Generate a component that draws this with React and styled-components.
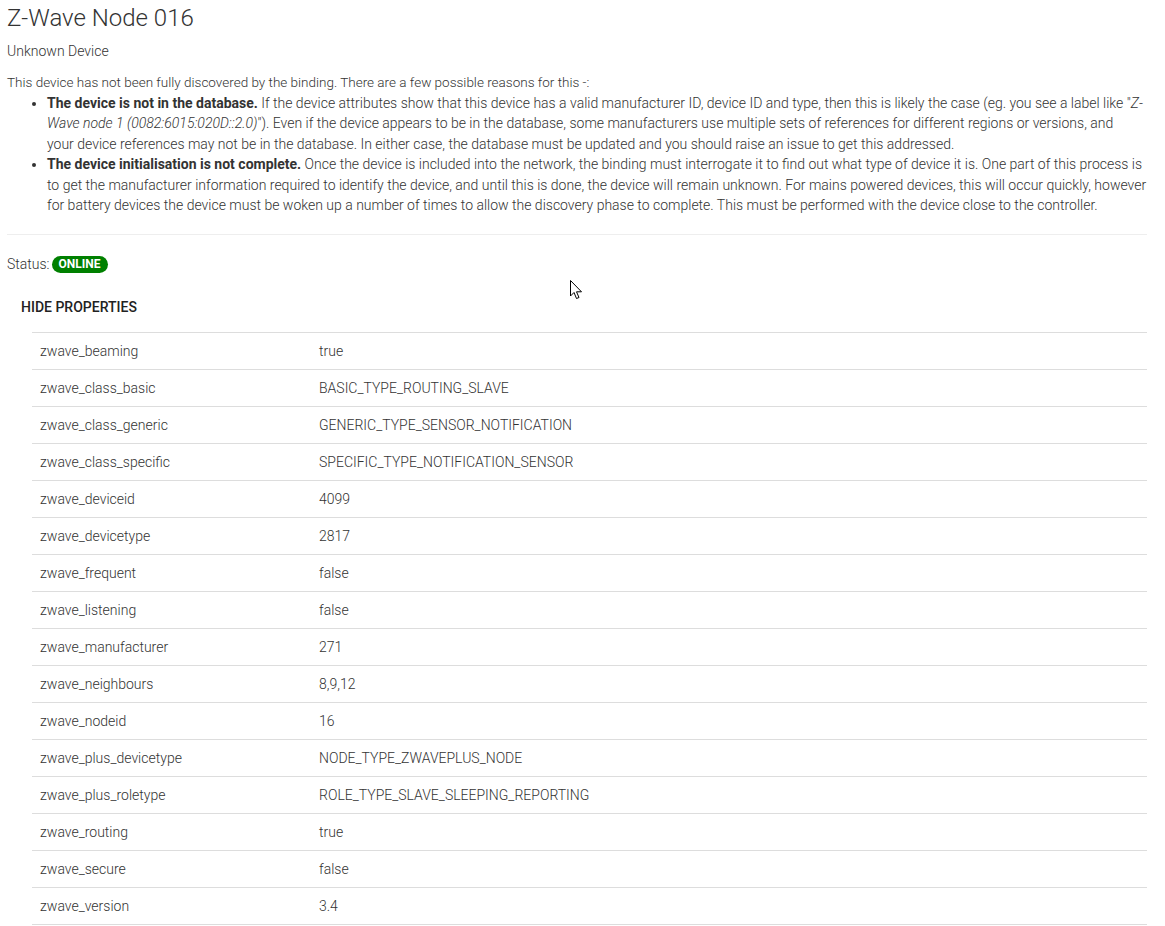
import React from "react";
import styled, { createGlobalStyle } from "styled-components";

const GlobalStyle = createGlobalStyle`
  body {
    margin: 0;
    background: #fff;
    font-family: Roboto, "Noto Sans", sans-serif;
    font-weight: 300;
    color: #333;
  }
`;

const Page = styled.div`
  position: relative;
  padding: 4px 18px 0 7px;
  font-size: 14px;
`;
const Title = styled.h1`
  margin: 0;
  font-size: 24px;
  font-weight: 300;
  line-height: 28px;
  color: #333;
`;
const Subtitle = styled.div`
  margin-top: 11px;
  line-height: 16px;
`;
const Intro = styled.div`
  margin-top: 13px;
  font-size: 13.5px;
  line-height: 20.5px;
`;
const Reasons = styled.ul`
  margin: 0;
  padding-left: 40px;
  li {
    line-height: 20.5px;
  }
  b {
    font-weight: 700;
  }
`;
const Divider = styled.hr`
  margin: 18px 0 0;
  border: 0;
  border-top: 1px solid #eee;
`;
const StatusLine = styled.div`
  margin-top: 21px;
  display: flex;
  align-items: center;
  gap: 2px;
  line-height: 17px;
`;
const Badge = styled.span`
  display: inline-block;
  background: #008000;
  color: #fff;
  font-weight: 700;
  font-size: 12px;
  line-height: 17px;
  padding: 0 7px;
  border-radius: 9px;
`;
const Toggle = styled.div`
  margin: 26px 0 0 14px;
  font-weight: 500;
  font-size: 14px;
  line-height: 16px;
  color: #222;
`;
const Table = styled.div`
  margin: 17px 0 0 25px;
  border-bottom: 1px solid #ddd;
`;
const Row = styled.div`
  display: grid;
  grid-template-columns: 279px 1fr;
  height: 36px;
  align-items: center;
  border-top: 1px solid #ddd;
  padding-left: 8px;
`;
const Cursor = styled.svg`
  position: absolute;
  left: 570px;
  top: 280px;
`;

const props = [
  ["zwave_beaming", "true"],
  ["zwave_class_basic", "BASIC_TYPE_ROUTING_SLAVE"],
  ["zwave_class_generic", "GENERIC_TYPE_SENSOR_NOTIFICATION"],
  ["zwave_class_specific", "SPECIFIC_TYPE_NOTIFICATION_SENSOR"],
  ["zwave_deviceid", "4099"],
  ["zwave_devicetype", "2817"],
  ["zwave_frequent", "false"],
  ["zwave_listening", "false"],
  ["zwave_manufacturer", "271"],
  ["zwave_neighbours", "8,9,12"],
  ["zwave_nodeid", "16"],
  ["zwave_plus_devicetype", "NODE_TYPE_ZWAVEPLUS_NODE"],
  ["zwave_plus_roletype", "ROLE_TYPE_SLAVE_SLEEPING_REPORTING"],
  ["zwave_routing", "true"],
  ["zwave_secure", "false"],
  ["zwave_version", "3.4"],
];

export default function App() {
  return (
    <Page>
      <GlobalStyle />
      <Title>Z-Wave Node 016</Title>
      <Subtitle>Unknown Device</Subtitle>
      <Intro>
        This device has not been fully discovered by the binding. There are a few possible reasons for this -:
      </Intro>
      <Reasons>
        <li>
          <b>The device is not in the database.</b> If the device attributes show that this device has a valid
          manufacturer ID, device ID and type, then this is likely the case (eg. you see a label like "
          <i>Z-Wave node 1 (0082:6015:020D::2.0)</i>"). Even if the device appears to be in the database, some
          manufacturers use multiple sets of references for different regions or versions, and
          <br />
          your device references may not be in the database. In either case, the database must be updated and
          you should raise an issue to get this addressed.
        </li>
        <li>
          <b>The device initialisation is not complete.</b> Once the device is included into the network, the
          binding must interrogate it to find out what type of device it is. One part of this process is to get
          the manufacturer information required to identify the device, and until this is done, the device will
          remain unknown. For mains powered devices, this will occur quickly, however for battery devices the
          device must be woken up a number of times to allow the discovery phase to complete. This must be
          performed with the device close to the controller.
        </li>
      </Reasons>
      <Divider />
      <StatusLine>
        Status: <Badge>ONLINE</Badge>
      </StatusLine>
      <Toggle>HIDE PROPERTIES</Toggle>
      <Table>
        {props.map(([k, v]) => (
          <Row key={k}>
            <span>{k}</span>
            <span>{v}</span>
          </Row>
        ))}
      </Table>
      <Cursor width="13" height="20" viewBox="0 0 13 20">
        <path d="M0.5 0.5 L0.5 16 L4 12.5 L6.5 18.5 L9 17.5 L6.5 11.8 L11.5 11.8 Z" fill="#fff" stroke="#000" strokeWidth="1" />
      </Cursor>
    </Page>
  );
}
